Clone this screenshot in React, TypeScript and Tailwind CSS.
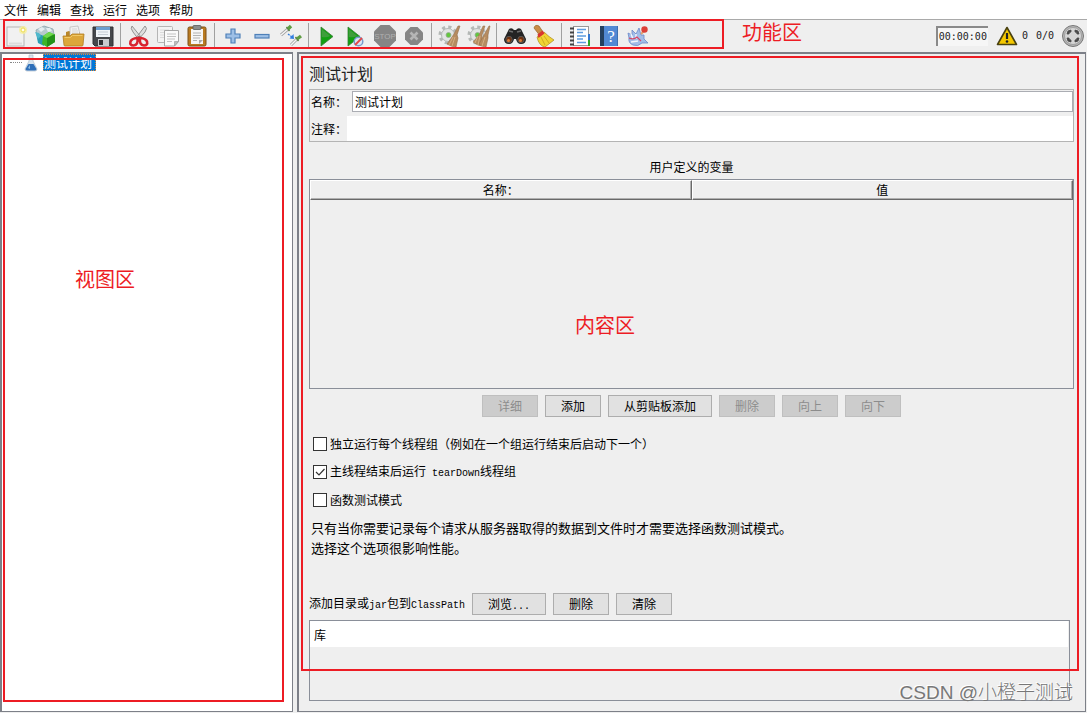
import React, { useState } from 'react';

const NewIcon = () => (
  <svg width="22" height="24" viewBox="0 0 22 24">
    <rect x="2" y="3" width="17" height="19" fill="#f1f1f1" stroke="#b5b5b5" />
    <path d="M4 19.500h13" stroke="#dcdcdc" strokeWidth="2" />
    <circle cx="18" cy="6" r="4" fill="#f7ef9a" opacity="0.8" />
    <circle cx="18" cy="6" r="2" fill="#fffef0" stroke="#eddc4e" />
  </svg>
);

const TemplatesIcon = () => (
  <svg width="24" height="24" viewBox="0 0 24 24">
    <path d="M3 6l8-4 9 3 1 5-9 4-8-3z" fill="#b7c9cf" stroke="#7f9ba5" strokeWidth="0.7" />
    <path d="M5 5l4-2 3 2-4 3zM13 4l4 0 2 3-4 1z" fill="#e4eef1" />
    <path d="M3 9l8 3v10l-6-3z" fill="#2b9cb4" />
    <path d="M2 8l4 1 2 3-3 3z" fill="#4fb8cc" />
    <path d="M10 12l6-4 6 3v7l-8 5-5-3z" fill="#3cb62a" />
    <path d="M14 14l8-4v8l-8 5z" fill="#23921a" />
    <path d="M10 12l6-4 5 2-7 4z" fill="#6fd94c" />
  </svg>
);

const OpenIcon = () => (
  <svg width="24" height="24" viewBox="0 0 24 24">
    <path d="M4 8l3-1 2 1h9v11H4z" fill="#b8862a" />
    <path d="M8 3l8-1 3 13H8z" fill="#f2f2f2" stroke="#b8b8b8" strokeWidth="0.7" />
    <path d="M10 5h5M10 7h6M10 9h6" stroke="#cfcfcf" strokeWidth="0.8" />
    <path d="M1 12h7l2-2h12l-1 11q0 1-1 1H3q-1 0-1-1z" fill="#dca63a" stroke="#b07c1f" strokeWidth="0.8" />
    <path d="M2.500 13.500h6l2-2h10" stroke="#f0c866" fill="none" />
  </svg>
);

const SaveIcon = () => (
  <svg width="24" height="24" viewBox="0 0 24 24">
    <path d="M2 3h20v19H4l-2-2z" fill="#45474b" stroke="#303134" />
    <rect x="5" y="3" width="14" height="10" fill="#f0f4f8" />
    <path d="M5 3h14v3H5z" fill="#6b9ed0" />
    <path d="M7 8h10M7 10.500h10" stroke="#c5ccd4" />
    <rect x="7" y="15" width="11" height="7" fill="#c9cbce" />
    <rect x="8" y="16" width="4" height="5" fill="#303134" />
  </svg>
);

const CutIcon = () => (
  <svg width="22" height="24" viewBox="0 0 22 24">
    <path d="M4 2q-2 2 1 6l6 8 2-3zM17 2q3 2 0 6l-7 8-2-2z" fill="#dedede" stroke="#8a8a8a" strokeWidth="0.9" />
    <circle cx="11" cy="13" r="1" fill="#666" />
    <path d="M9.500 14q1 7-4 7.500-4 0-3-4 1-3 7-3.500zM12 14q-1 7 4 7.500 4 0 3-4-1-3-7-3.500z" fill="none" stroke="#d8232f" strokeWidth="2.600" />
  </svg>
);

const CopyIcon = () => (
  <svg width="24" height="24" viewBox="0 0 24 24">
    <rect x="1.500" y="2.500" width="15" height="16" rx="1" fill="#f3f3f3" stroke="#b5b5b5" />
    <path d="M4 6h9M4 8.500h9M4 11h4M4 13.500h4" stroke="#dadada" />
    <path d="M8.500 6.500h14v11l-4 4.500h-10z" fill="#fafafa" stroke="#a5a5a5" />
    <path d="M11 10h9M11 12.500h9M11 15h8M11 17.500h5" stroke="#c2c2c2" />
    <path d="M18.500 22v-4.500h4z" fill="#bdbdbd" stroke="#999" strokeWidth="0.6" />
  </svg>
);

const PasteIcon = () => (
  <svg width="22" height="24" viewBox="0 0 22 24">
    <rect x="2" y="3" width="18" height="19" rx="1.500" fill="#b97b22" stroke="#7c5118" />
    <path d="M5 5h12v15H5z" fill="#f6f6f6" />
    <rect x="7" y="1.500" width="8" height="4" rx="1" fill="#8b8d8c" stroke="#585a59" strokeWidth="0.8" />
    <path d="M7 9h8M7 11.500h8M7 14h7M7 16.500h4" stroke="#b2b2b2" />
    <path d="M13 20v-4h4z" fill="#a8a8a8" />
  </svg>
);

const PlusIcon = () => (
  <svg width="20" height="20" viewBox="0 0 20 20">
    <path d="M8 3h4v5h5v4h-5v5H8v-5H3V8h5z" fill="#9dbfe6" stroke="#4f80b8" strokeWidth="1.200" />
  </svg>
);

const MinusIcon = () => (
  <svg width="20" height="20" viewBox="0 0 20 20">
    <rect x="3" y="8.500" width="14" height="3.500" fill="#9dbfe6" stroke="#4f80b8" strokeWidth="1.200" />
  </svg>
);

const ToggleIcon = () => (
  <svg width="24" height="24" viewBox="0 0 24 24">
    <path d="M2 11l7-6M12 21l6-6" stroke="#a3a3a3" strokeWidth="3" />
    <path d="M2 11l7-6M12 21l6-6" stroke="#f6f6f6" strokeWidth="1.400" />
    <path d="M7.500 3l3 4M16.500 13l3 4" stroke="#557a45" strokeWidth="1.400" />
    <path d="M9 5l3-3M18 15l4-3" stroke="#5f9d43" strokeWidth="3.400" />
    <path d="M9 10l4 3" stroke="#327de0" strokeWidth="1.400" strokeDasharray="2 1" />
    <path d="M10.500 14.500l4.500 .5-.5-5z" fill="#327de0" />
  </svg>
);

const StartIcon = () => (
  <svg width="22" height="24" viewBox="0 0 22 24">
    <path d="M5 3l12 9.500L5 22z" fill="#12a012" stroke="#3b7d37" strokeWidth="0.8" />
    <path d="M5.800 5l8.500 7q-4 2-8.500 1z" fill="#3f9e3c" />
  </svg>
);

const StartNoPauseIcon = () => (
  <svg width="24" height="24" viewBox="0 0 24 24">
    <path d="M4 3l12 9.500L4 22z" fill="#12a012" stroke="#3b7d37" strokeWidth="0.8" />
    <path d="M4.800 5l8.500 7q-4 2-8.500 1z" fill="#3f9e3c" />
    <circle cx="14.500" cy="17.500" r="4.300" fill="#dce6f5" stroke="#7799cc" strokeWidth="1.500" />
    <path d="M11 21l7-7" stroke="#e34747" strokeWidth="1.800" />
  </svg>
);

const StopIcon = () => (
  <svg width="24" height="24" viewBox="0 0 24 24">
    <path d="M7.500 1h9L23 7.500v9L16.500 23h-9L1 16.500v-9z" fill="#858585" />
    <text x="12" y="15" textAnchor="middle" fontSize="8" fontFamily="Liberation Sans, sans-serif" fill="#b0b0b0">STOP</text>
  </svg>
);

const ShutdownIcon = () => (
  <svg width="22" height="22" viewBox="0 0 22 22">
    <path d="M7.500 2h7L20 7.500v7L14.500 20h-7L2 14.500v-7z" fill="#858585" />
    <path d="M7.500 7.500l7 7M14.500 7.500l-7 7" stroke="#b5b5b5" strokeWidth="2.600" />
  </svg>
);

const Gear = () => (
  <g>
    <circle cx="10" cy="11" r="8" fill="none" stroke="#b4b8b6" strokeWidth="3" strokeDasharray="3.200 3.080" />
    <circle cx="10" cy="11" r="6.500" fill="#e2e5e3" stroke="#b4b8b6" />
    <circle cx="10.500" cy="11" r="2.500" fill="#62c83c" stroke="#9aa89a" strokeWidth="0.8" />
  </g>
);

const ClearIcon = () => (
  <svg width="24" height="24" viewBox="0 0 24 24">
    <Gear />
    <path d="M20 2l2 0-3 9 1 3-2 9q-4 0-9-3l5-7 2-3z" fill="#b68c60" stroke="#94704c" strokeWidth="0.6" />
    <path d="M15 13l-4 8M17 13l-3 9" stroke="#e0be92" strokeWidth="0.7" />
  </svg>
);

const ClearAllIcon = () => (
  <svg width="24" height="24" viewBox="0 0 24 24">
    <Gear />
    <path d="M16 2l2 0-3 9 0 11q-4 0-9-4l6-7z" fill="#b68c60" stroke="#94704c" strokeWidth="0.5" />
    <path d="M22 2l1 0-2 9 0 3-2 9q-4 0-7-3l5-9z" fill="#b68c60" stroke="#94704c" strokeWidth="0.6" />
    <path d="M11 12l-3 7M13 12l-2 9M18 13l-3 9" stroke="#e0be92" strokeWidth="0.7" />
  </svg>
);

const SearchIcon = () => (
  <svg width="24" height="24" viewBox="0 0 24 24">
    <path d="M6 5q3-2 5 1l2 0q2-3 5-1l5 10q0 5-5 5-4 0-5-5h-2q-1 5-5 5-5 0-5-5z" fill="#242424" />
    <path d="M6 7l4 1M14 8l4-1" stroke="#6d6d6d" strokeWidth="1.500" />
    <circle cx="6" cy="15.500" r="3.200" fill="#6f3412" stroke="#565656" />
    <circle cx="18" cy="15.500" r="3.200" fill="#6f3412" stroke="#565656" />
    <circle cx="5.500" cy="16.500" r="1.500" fill="#d97b3b" />
    <circle cx="17.500" cy="16.500" r="1.500" fill="#d97b3b" />
  </svg>
);

const BroomIcon = () => (
  <svg width="24" height="24" viewBox="0 0 24 24">
    <path d="M2 4q1-4 5-2l4 6-4 2.500z" fill="#c98d46" stroke="#966326" strokeWidth="0.7" />
    <path d="M12 8q5 5 10 8L13 23q-6-1-8-10z" fill="#f0d433" stroke="#b3932a" strokeWidth="0.8" />
    <path d="M9 13l4 8M12 12l5 7" stroke="#d0ab20" />
    <path d="M5.500 10.500l5-4 2 3-6 4.500z" fill="#d8372f" />
  </svg>
);

const FunctionHelperIcon = () => (
  <svg width="24" height="24" viewBox="0 0 24 24">
    <rect x="5.500" y="2.500" width="15" height="19" fill="#fff" stroke="#999" />
    <path d="M20 10h2v6h-2z" fill="#3578d0" />
    <path d="M20 16h2v6h-2z" fill="#2fa72d" />
    <path d="M9 5.500h9M9 8.500h6M9 12h9M9 15h6M9 18.500h9" stroke="#5d9de0" strokeWidth="1.500" />
    <path d="M2 4.500h4M2 8.500h4M2 12.500h4M2 16.500h4M2 20.500h4" stroke="#444" strokeWidth="1.800" />
  </svg>
);

const HelpIcon = () => (
  <svg width="22" height="24" viewBox="0 0 22 24">
    <rect x="2" y="2" width="4" height="20" fill="#24405f" />
    <rect x="6" y="2" width="14" height="20" fill="#5189d4" />
    <path d="M19.500 2v20" stroke="#3e6fb0" />
    <text x="13" y="18" textAnchor="middle" fontSize="17" fontFamily="Liberation Serif, serif" fill="#fff">?</text>
  </svg>
);

const FeatherIcon = () => (
  <svg width="24" height="24" viewBox="0 0 24 24">
    <path d="M2 9l4 2 0-5 4 4 3-6 2 7 3 0 0 4 4 4-6 0q-4 4-9 2-5-2-4-7z" fill="#a2bde8" stroke="#6c88c9" strokeWidth="0.8" />
    <path d="M5 10l2 5M10 10l0 5M5 18l7-1" stroke="#f3f6fc" strokeWidth="1.400" />
    <path d="M3 14q5 2 8-1l4 4" fill="none" stroke="#d4486a" strokeWidth="1.200" />
    <path d="M15 10l3-3" stroke="#e0a070" strokeWidth="2" />
    <circle cx="18.500" cy="5.500" r="3.200" fill="#dc4038" />
  </svg>
);

const WarningIcon = () => (
  <svg width="22" height="20" viewBox="0 0 22 20">
    <path d="M11 1.500L20.500 18.500h-19z" fill="#f5c800" stroke="#4a4210" strokeWidth="1.600" strokeLinejoin="round" />
    <path d="M11 7v6" stroke="#222" strokeWidth="2.200" />
    <circle cx="11" cy="15.500" r="1.300" fill="#222" />
  </svg>
);

const ExpandIcon = () => (
  <svg width="24" height="24" viewBox="0 0 24 24">
    <circle cx="12" cy="12" r="10.500" fill="#b5b5b5" stroke="#777" />
    <circle cx="12" cy="12" r="8.500" fill="#d5d5d5" stroke="#8f8f8f" strokeWidth="0.7" />
    <path d="M10 6q-4 0-4 4l2 0q0-2 2-2zM14 6q4 0 4 4l-2 0q0-2-2-2zM10 18q-4 0-4-4l2 0q0 2 2 2zM14 18q4 0 4-4l-2 0q0 2-2 2z" fill="#4b4b4b" stroke="#4b4b4b" strokeWidth="0.8" />
  </svg>
);

const FlaskIcon = () => (
  <svg width="14" height="18" viewBox="0 0 14 18">
    <path d="M5 1h4v6l4 8q0 2-2 2H3q-2 0-2-2l4-8z" fill="#d8e4ee" stroke="#b3bfca" strokeWidth="0.7" />
    <path d="M4.500 10h5l3 5q0 1.500-2 1.500h-7q-2 0-2-1.500z" fill="#2f6fb9" />
    <path d="M4 14l2-3v4z" fill="#8ebbe6" />
  </svg>
);

const toolGroups = [
  [
    { label: '新建', Icon: NewIcon },
    { label: '模板', Icon: TemplatesIcon },
    { label: '打开', Icon: OpenIcon },
    { label: '保存', Icon: SaveIcon },
  ],
  [
    { label: '剪切', Icon: CutIcon },
    { label: '复制', Icon: CopyIcon },
    { label: '粘贴', Icon: PasteIcon },
  ],
  [
    { label: '展开', Icon: PlusIcon },
    { label: '折叠', Icon: MinusIcon },
    { label: '切换', Icon: ToggleIcon },
  ],
  [
    { label: '启动', Icon: StartIcon },
    { label: '不停顿开始', Icon: StartNoPauseIcon },
    { label: '停止', Icon: StopIcon },
    { label: '关闭', Icon: ShutdownIcon },
  ],
  [
    { label: '清除', Icon: ClearIcon },
    { label: '清除全部', Icon: ClearAllIcon },
  ],
  [
    { label: '查找', Icon: SearchIcon },
    { label: '重置查找', Icon: BroomIcon },
  ],
  [
    { label: '函数助手', Icon: FunctionHelperIcon },
    { label: '帮助', Icon: HelpIcon },
    { label: '关于', Icon: FeatherIcon },
  ],
];

const menus = ['文件', '编辑', '查找', '运行', '选项', '帮助'];

const variableActions = [
  { label: '详细', enabled: false },
  { label: '添加', enabled: true },
  { label: '从剪贴板添加', enabled: true },
  { label: '删除', enabled: false },
  { label: '向上', enabled: false },
  { label: '向下', enabled: false },
];

const Latin = ({ children }: { children: React.ReactNode }) => (
  <span className="font-['Liberation_Mono',monospace] text-[10px]">{children}</span>
);

interface PushButtonProps {
  children: React.ReactNode;
  disabled?: boolean;
}

const PushButton = ({ children, disabled = false }: PushButtonProps) => (
  <button
    disabled={disabled}
    className="h-[22px] min-w-14 border border-[#adadad] bg-[#e1e1e1] px-[15px] leading-5 disabled:border-[#bfbfbf] disabled:bg-[#cccccc] disabled:text-[#8c8c8c]"
  >
    {children}
  </button>
);

interface CheckRowProps {
  id: string;
  checked: boolean;
  onChange: (checked: boolean) => void;
  children: React.ReactNode;
}

const CheckRow = ({ id, checked, onChange, children }: CheckRowProps) => (
  <div className="flex h-7 items-center gap-[3px] pl-1">
    <div className="relative flex">
      <input
        id={id}
        type="checkbox"
        checked={checked}
        onChange={(e) => onChange(e.target.checked)}
        className="size-[14px] appearance-none border border-[#333] bg-white"
      />
      {checked && (
        <svg className="pointer-events-none absolute inset-0" width="14" height="14" viewBox="0 0 14 14">
          <path d="M3 7l3 3 5.500-6" fill="none" stroke="#333" strokeWidth="1.200" />
        </svg>
      )}
    </div>
    <label htmlFor={id}>{children}</label>
  </div>
);

const ColumnHeader = ({ children }: { children: React.ReactNode }) => (
  <th className="h-5 border border-t-white border-r-[#696969] border-b-[#696969] border-l-white p-0 font-normal leading-[18px] shadow-[inset_-1px_-1px_0_#b0b0b0]">
    {children}
  </th>
);

function App() {
  const [name, setName] = useState('测试计划');
  const [comment, setComment] = useState('');
  const [serialized, setSerialized] = useState(false);
  const [tearDown, setTearDown] = useState(true);
  const [functional, setFunctional] = useState(false);

  return (
    <div className="flex min-h-screen flex-col bg-[#efefef] font-['Noto_Sans_CJK_SC',sans-serif] text-xs text-black">
      <nav className="flex h-[19px] items-center gap-[9px] bg-white pl-1">
        {menus.map((menu) => (
          <button key={menu} className="leading-[19px]">{menu}</button>
        ))}
      </nav>

      <header className="relative flex h-[33px] items-center border-t border-[#a9a9a9] pl-px">
        {toolGroups.map((group, index) => (
          <React.Fragment key={index}>
            {index > 0 && <div className="mx-[3px] h-[26px] w-px bg-[#a0a0a0]" />}
            {group.map(({ label, Icon }) => (
              <button key={label} aria-label={label} className="flex h-7 w-[29px] items-center justify-center">
                <Icon />
              </button>
            ))}
          </React.Fragment>
        ))}
        <div className="ml-auto flex items-center pr-[2px] font-['DejaVu_Sans_Mono',monospace] text-[10px] text-[#222]">
          <div className="mr-2 h-5 border-t-2 border-l-2 border-[#8a8a8a] bg-[#f6f6f6] px-px leading-[18px]">00:00:00</div>
          <WarningIcon />
          <span className="ml-1">0</span>
          <span className="mr-[7px] ml-2">0/0</span>
          <button aria-label="展开面板">
            <ExpandIcon />
          </button>
        </div>
        <div className="pointer-events-none absolute top-[-1px] left-[3px] h-[30px] w-[721px] border-2 border-[#ed1c24]" />
        <span className="pointer-events-none absolute top-[-2px] left-[742px] text-xl leading-7 text-[#ed1c24]">功能区</span>
      </header>

      <div className="flex grow gap-1 pr-px pb-px">
        <aside className="relative w-[293px] shrink-0 border-t-2 border-r border-b border-l-2 border-[#7d8088] bg-white">
          <div className="flex h-[17px] items-center pl-2">
            <div className="mr-[2px] w-3 border-t border-dotted border-[#888]" />
            <FlaskIcon />
            <button className="ml-[5px] h-[17px] border border-dotted border-[#e08a3c] bg-[#0078d7] pr-[3px] leading-[15px] text-white">
              测试计划
            </button>
          </div>
          <div className="pointer-events-none absolute top-1 right-2 bottom-[9px] left-px border-2 border-[#ed1c24]" />
          <span className="pointer-events-none absolute top-[211px] left-[73px] text-xl leading-7 text-[#ed1c24]">视图区</span>
        </aside>

        <main className="relative flex grow flex-col border-t-2 border-r border-b border-l-2 border-[#7d8088] pr-[11px] pb-[10px] pl-[10px]">
          <h1 className="pt-[6px] pb-[2px] text-base leading-[27px] text-[#222]">测试计划</h1>

          <form className="border border-[#b4b4b4]">
            <div className="flex items-center pt-px">
              <label htmlFor="plan-name" className="w-[42px] pl-px">名称：</label>
              <input
                id="plan-name"
                value={name}
                onChange={(e) => setName(e.target.value)}
                className="h-[21px] grow border border-[#abadb3] bg-white px-[2px]"
              />
            </div>
            <div className="flex items-center pt-1">
              <label htmlFor="plan-comment" className="w-[37px] pl-px">注释：</label>
              <input
                id="plan-comment"
                value={comment}
                onChange={(e) => setComment(e.target.value)}
                className="h-[25px] grow bg-white px-[2px]"
              />
            </div>
          </form>

          <section className="mt-4">
            <h2 className="pb-1 text-center leading-[17px]">用户定义的变量</h2>
            <div className="h-[210px] border border-[#8a8f99]">
              <table className="w-full table-fixed border-separate border-spacing-0">
                <thead>
                  <tr>
                    <ColumnHeader>名称：</ColumnHeader>
                    <ColumnHeader>值</ColumnHeader>
                  </tr>
                </thead>
              </table>
            </div>
            <div className="mt-[6px] flex justify-center gap-[7px]">
              {variableActions.map((action) => (
                <PushButton key={action.label} disabled={!action.enabled}>{action.label}</PushButton>
              ))}
            </div>
          </section>

          <section className="mt-[13px]">
            <CheckRow id="serialized" checked={serialized} onChange={setSerialized}>
              独立运行每个线程组（例如在一个组运行结束后启动下一个）
            </CheckRow>
            <CheckRow id="teardown" checked={tearDown} onChange={setTearDown}>
              主线程结束后运行<Latin>&nbsp;tearDown</Latin>线程组
            </CheckRow>
            <CheckRow id="functional" checked={functional} onChange={setFunctional}>
              函数测试模式
            </CheckRow>
            <p className="mt-1 pl-[2px] text-[13px] leading-5">
              只有当你需要记录每个请求从服务器取得的数据到文件时才需要选择函数测试模式。
              <br />
              选择这个选项很影响性能。
            </p>
          </section>

          <section className="mt-[35px] flex grow flex-col">
            <div className="flex items-center gap-[7px]">
              <span>
                添加目录或<Latin>jar</Latin>包到<Latin>ClassPath</Latin>
              </span>
              <PushButton>
                浏览<Latin>...</Latin>
              </PushButton>
              <PushButton>删除</PushButton>
              <PushButton>清除</PushButton>
            </div>
            <div className="mt-[5px] mr-1 min-h-20 grow border border-[#8a8f99]">
              <div className="mr-px h-[26px] bg-white pl-1 leading-7">库</div>
            </div>
          </section>

          <div className="pointer-events-none absolute top-[2px] right-[6px] bottom-10 left-[2px] border-2 border-[#ed1c24]" />
          <span className="pointer-events-none absolute top-[257px] left-[276px] text-xl leading-7 text-[#ed1c24]">内容区</span>
          <span className="pointer-events-none absolute right-3 bottom-1 font-['Liberation_Sans','Noto_Sans_CJK_SC',sans-serif] text-[19px] leading-7 font-light text-[#777] [text-shadow:-1px_-1px_0_#fff]">
            CSDN @小橙子测试
          </span>
        </main>
      </div>
    </div>
  );
}

export default App;
